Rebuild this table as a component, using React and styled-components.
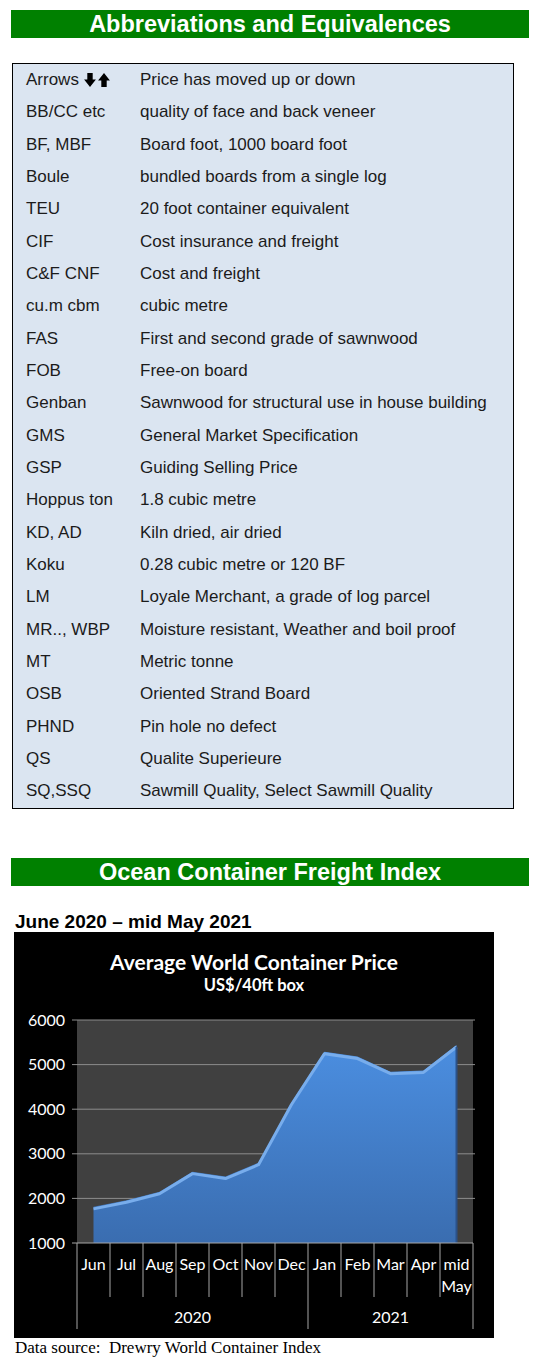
import React from 'react';
import styled, { createGlobalStyle } from 'styled-components';

const GlobalStyle = createGlobalStyle`
  body {
    margin: 0;
    background: #fff;
    font-family: "Liberation Sans", Arial, sans-serif;
  }
`;

const Page = styled.div`
  width: 549px;
  padding-top: 10px;
  display: flex;
  flex-direction: column;
`;

const Banner = styled.div`
  margin-left: 11px;
  width: 518px;
  height: 28px;
  background: #008000;
  color: #fff;
  font-family: "Liberation Sans", Arial, sans-serif;
  font-weight: bold;
  font-size: 23.5px;
  line-height: 28px;
  text-align: center;
  margin-top: ${(p) => p.$top || 0}px;
`;

const AbbrTable = styled.div`
  margin: 25px 0 0 12px;
  width: 502px;
  box-sizing: border-box;
  border: 1px solid #000;
  background: #dbe5f1;
  display: flex;
  flex-direction: column;
`;

const Row = styled.div`
  display: grid;
  grid-template-columns: 114px 1fr;
  height: 32.33px;
  align-items: center;
  padding-left: 13px;
  font-size: 17px;
  color: #1b1b1b;
  white-space: nowrap;
`;

const Abbr = styled.div`
  display: flex;
  align-items: center;
  gap: 5px;
`;

const Period = styled.div`
  margin: 25px 0 0 15px;
  font-weight: bold;
  font-size: 19px;
  line-height: 21px;
  color: #000;
`;

const ChartFrame = styled.div`
  margin-left: 14px;
  width: 480px;
  height: 406px;
  background: #000;
  color: #fff;
  display: flex;
  flex-direction: column;
  font-family: Lato, "Open Sans", sans-serif;
`;

const ChartHead = styled.div`
  height: 70px;
  display: flex;
  flex-direction: column;
  align-items: center;
  padding-top: 17px;
  box-sizing: border-box;
`;

const ChartTitle = styled.div`
  font-weight: bold;
  font-size: 21px;
  line-height: 25px;
`;

const ChartSub = styled.div`
  font-weight: bold;
  font-size: 16.5px;
  line-height: 20px;
  margin-top: 1px;
`;

const Source = styled.div`
  margin-left: 15px;
  font-family: "Liberation Serif", "Times New Roman", serif;
  font-size: 17px;
  line-height: 20px;
  color: #000;
`;

const rows = [
  ['Arrows', 'Price has moved up or down'],
  ['BB/CC etc', 'quality of face and back veneer'],
  ['BF, MBF', 'Board foot, 1000 board foot'],
  ['Boule', 'bundled boards from a single log'],
  ['TEU', '20 foot container equivalent'],
  ['CIF', 'Cost insurance and freight'],
  ['C&F CNF', 'Cost and freight'],
  ['cu.m cbm', 'cubic metre'],
  ['FAS', 'First and second grade of sawnwood'],
  ['FOB', 'Free-on board'],
  ['Genban', 'Sawnwood for structural use in house building'],
  ['GMS', 'General Market Specification'],
  ['GSP', 'Guiding Selling Price'],
  ['Hoppus ton', '1.8 cubic metre'],
  ['KD, AD', 'Kiln dried, air dried'],
  ['Koku', '0.28 cubic metre or 120 BF'],
  ['LM', 'Loyale Merchant, a grade of log parcel'],
  ['MR.., WBP', 'Moisture resistant, Weather and boil proof'],
  ['MT', 'Metric tonne'],
  ['OSB', 'Oriented Strand Board'],
  ['PHND', 'Pin hole no defect'],
  ['QS', 'Qualite Superieure'],
  ['SQ,SSQ', 'Sawmill Quality, Select Sawmill Quality'],
];

const ArrowsIcon = () => (
  <svg width="26" height="14" viewBox="0 0 24 13">
    <path d="M3 0h5v6h3l-5.5 7L0 6h3z" fill="#000" />
    <path d="M16 13h5V7h3L18.5 0 13 7h3z" fill="#000" />
  </svg>
);

const months = ['Jun', 'Jul', 'Aug', 'Sep', 'Oct', 'Nov', 'Dec', 'Jan', 'Feb', 'Mar', 'Apr', 'mid'];
const values = [1810, 1960, 2150, 2600, 2490, 2800, 4150, 5290, 5180, 4840, 4870, 5440];

const PL = 63;
const PR = 459;
const PT = 18;
const STEP = 44.6;
const CW = 33;
const xAt = (i) => PL + CW * i + CW / 2;
const yAt = (v) => PT + ((6000 - v) / 1000) * STEP;
const base = yAt(1000);
const label = { fill: '#fff', fontSize: 16, fontFamily: 'Lato, sans-serif' };

const Chart = () => {
  const top = values.map((v, i) => `${xAt(i)},${yAt(v)}`).join(' ');
  const area = `${xAt(0)},${base} ${top} ${xAt(11)},${base}`;
  return (
    <svg width="480" height="336" viewBox="0 0 480 336">
      <defs>
        <linearGradient id="fill" x1="0" y1="0" x2="0" y2="1">
          <stop offset="0" stopColor="#4b8ee0" />
          <stop offset="1" stopColor="#3a6db0" />
        </linearGradient>
      </defs>
      <rect x={PL} y={PT} width={PR - PL} height={base - PT} fill="#404040" />
      {[6000, 5000, 4000, 3000, 2000].map((v) => (
        <line key={v} x1={PL - 5} x2={PR + 2} y1={yAt(v)} y2={yAt(v)} stroke="#8c8c8c" strokeWidth="1" />
      ))}
      <polygon points={area} fill="url(#fill)" />
      <polyline points={top} fill="none" stroke="#78adec" strokeWidth="3" strokeLinejoin="round" transform="translate(0,2)" />
      <line x1={xAt(11)} x2={xAt(11)} y1={yAt(5440) + 2} y2={base} stroke="#2b5188" strokeWidth="2" />
      {[6000, 5000, 4000, 3000, 2000, 1000].map((v) => (
        <text key={v} x="51" y={yAt(v) + 5.5} textAnchor="end" {...label}>
          {v}
        </text>
      ))}
      <line x1={PL - 5} x2={PR} y1={base} y2={base} stroke="#a6a6a6" strokeWidth="1" />
      {Array.from({ length: 13 }).map((_, i) => {
        const x = PL + CW * i;
        const long = i === 0 || i === 7 || i === 12;
        return <line key={i} x1={x} x2={x} y1={base} y2={long ? 327 : 295} stroke="#a6a6a6" strokeWidth="1" />;
      })}
      {months.map((m, i) => (
        <text key={m} x={xAt(i)} y="268" textAnchor="middle" {...label}>
          {m}
        </text>
      ))}
      <text x={xAt(11)} y="290" textAnchor="middle" {...label}>
        May
      </text>
      <text x={(PL + PL + CW * 7) / 2} y="321" textAnchor="middle" {...label}>
        2020
      </text>
      <text x={(PL + CW * 7 + PR) / 2} y="321" textAnchor="middle" {...label}>
        2021
      </text>
    </svg>
  );
};

export default function App() {
  return (
    <Page>
      <GlobalStyle />
      <Banner>Abbreviations and Equivalences</Banner>
      <AbbrTable>
        {rows.map(([a, d], i) => (
          <Row key={a}>
            <Abbr>
              {a}
              {i === 0 && <ArrowsIcon />}
            </Abbr>
            <div>{d}</div>
          </Row>
        ))}
      </AbbrTable>
      <Banner $top={49}>Ocean Container Freight Index</Banner>
      <Period>June 2020 – mid May 2021</Period>
      <ChartFrame>
        <ChartHead>
          <ChartTitle>Average World Container Price</ChartTitle>
          <ChartSub>US$/40ft box</ChartSub>
        </ChartHead>
        <Chart />
      </ChartFrame>
      <Source>Data source:&nbsp; Drewry World Container Index</Source>
    </Page>
  );
}
